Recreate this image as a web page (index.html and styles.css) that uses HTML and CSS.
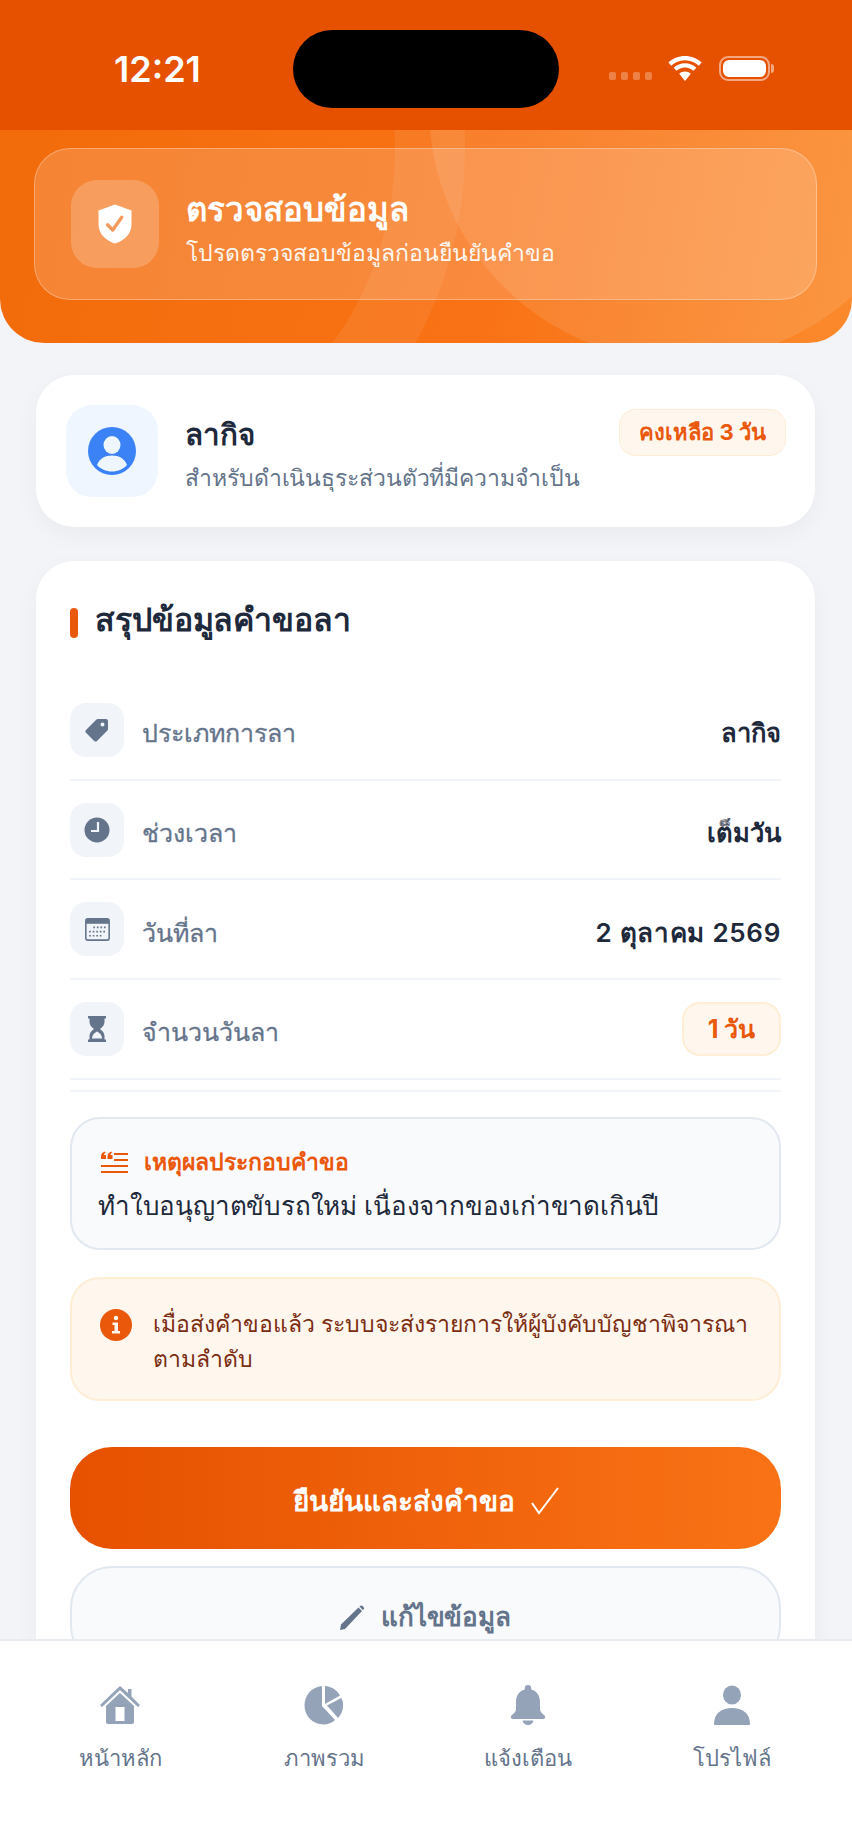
FILE: index.html
```html
<!DOCTYPE html>
<html lang="th">
<head>
    <meta charset="UTF-8">
    <meta name="viewport" content="width=device-width, initial-scale=1.0">
    <title>ตรวจสอบข้อมูล</title>
    <link rel="stylesheet" href="styles.css">
</head>
<body>
    <div class="screen">
        <header class="hero">
            <div class="status-bar">
                <span class="clock">12:21</span>
                <div class="island"></div>
                <div class="status-icons">
                    <span class="signal"><i></i><i></i><i></i><i></i></span>
                    <svg class="wifi" viewBox="0 0 34 26"><path d="M17 5c-5.200 0-9.800 2-13.300 5.300l-2.700-3C5.200 3.300 10.800 1 17 1s11.800 2.300 16 6.300l-2.700 3C26.800 7 22.200 5 17 5zM17 12c-3.200 0-6 1.200-8.200 3.200l-2.700-3C9 9.500 12.800 8 17 8s8 1.500 10.900 4.200l-2.700 3C23 13.200 20.200 12 17 12zM11.400 18c1.500-1.300 3.500-2.100 5.600-2.100s4.100.8 5.600 2.100L17 25z"/></svg>
                    <span class="battery"><b></b></span>
                </div>
            </div>
            <div class="hero-body">
                <div class="hero-art">
                    <span class="arc arc-big"></span>
                    <span class="arc arc-ring"></span>
                </div>
                <div class="glass-card">
                    <div class="glass-icon">
                        <svg viewBox="0 0 24 28" width="36" height="42"><path fill="#fff" d="M12 1l11 4v9c0 6.500-4.500 11-11 13C5.500 25 1 20.500 1 14V5z"/><path fill="none" stroke="#f59a5a" stroke-width="2.200" stroke-linecap="round" stroke-linejoin="round" d="M7 14.500l3.500 3.500 6-8.500"/></svg>
                    </div>
                    <div class="glass-text">
                        <h1>ตรวจสอบข้อมูล</h1>
                        <p>โปรดตรวจสอบข้อมูลก่อนยืนยันคำขอ</p>
                    </div>
                </div>
            </div>
        </header>

        <main class="content">
            <section class="card type-card">
                <div class="type-icon">
                    <svg viewBox="0 0 48 48" width="48" height="48"><circle cx="24" cy="24" r="24" fill="#3b82f6"/><ellipse cx="24" cy="18" rx="8.500" ry="9" fill="#eff6ff"/><path fill="#eff6ff" d="M9 38c2.500-6.500 8-9.500 15-9.500s12.500 3 15 9.500c-3.500 4-9 6.500-15 6.500S12.500 42 9 38z"/></svg>
                </div>
                <div class="type-text">
                    <h2>ลากิจ</h2>
                    <p>สำหรับดำเนินธุระส่วนตัวที่มีความจำเป็น</p>
                </div>
                <span class="badge">คงเหลือ 3 วัน</span>
            </section>

            <section class="card summary-card">
                <h3 class="section-title">สรุปข้อมูลคำขอลา</h3>

                <div class="row">
                    <span class="row-icon">
                        <svg viewBox="0 0 26 26" width="26" height="26"><path fill="#64748b" d="M14 2h8a2 2 0 0 1 2 2v8c0 .8-.3 1.300-.8 1.800L13 24c-.8.800-2 .8-2.800 0L2 15.800c-.8-.8-.8-2 0-2.800L12.200 2.800C12.700 2.300 13.200 2 14 2zm4.500 3.500a2 2 0 1 0 0 4 2 2 0 0 0 0-4z"/></svg>
                    </span>
                    <span class="row-label">ประเภทการลา</span>
                    <span class="row-value">ลากิจ</span>
                </div>
                <div class="row">
                    <span class="row-icon">
                        <svg viewBox="0 0 26 26" width="26" height="26"><circle cx="13" cy="13" r="12.500" fill="#64748b"/><path fill="none" stroke="#f1f5f9" stroke-width="2.200" d="M14 5v9H7"/></svg>
                    </span>
                    <span class="row-label">ช่วงเวลา</span>
                    <span class="row-value">เต็มวัน</span>
                </div>
                <div class="row">
                    <span class="row-icon">
                        <svg viewBox="0 0 24 22" width="25" height="23"><rect x=".8" y=".8" width="22.400" height="20.400" rx="2" fill="#f1f5f9" stroke="#64748b" stroke-width="1.500"/><rect x="1" y="1" width="22" height="4.500" fill="#64748b"/><path stroke="#64748b" stroke-width="1.600" stroke-dasharray="1.600 1.800" d="M8 9h12M4 13h16M4 17h12"/></svg>
                    </span>
                    <span class="row-label">วันที่ลา</span>
                    <span class="row-value row-date">2 ตุลาคม 2569</span>
                </div>
                <div class="row">
                    <span class="row-icon">
                        <svg viewBox="0 0 18 26" width="18" height="26"><path fill="#64748b" d="M0 0h18v2.500h-1.500v3.500c0 3-2 5.300-4.500 7 2.500 1.700 4.500 4 4.500 7v3.500H18V26H0v-2.500h1.500V20c0-3 2-5.300 4.500-7-2.500-1.700-4.500-4-4.500-7V2.500H0z"/><path fill="#f1f5f9" d="M9 15.500c-2.500 1.500-4.800 3-5 7h10c-.2-4-2.500-5.500-5-7z"/></svg>
                    </span>
                    <span class="row-label">จำนวนวันลา</span>
                    <span class="day-pill">1 วัน</span>
                </div>

                <div class="reason-box">
                    <div class="reason-label">
                        <svg viewBox="0 0 27 22" width="27" height="22"><path fill="none" stroke="#ea580c" stroke-width="2.200" d="M13 3h14M13 9h14M0 15h27M0 21h27"/><path fill="#ea580c" d="M0 5.500C0 3 1.500 1 4 .5L4.500 2C3.500 2.400 3 3 3 4h2v4H0zM6.500 5.500C6.500 3 8 1 10.500.5L11 2c-1 .4-1.500 1-1.500 2h2v4h-5z"/></svg>
                        <span>เหตุผลประกอบคำขอ</span>
                    </div>
                    <p>ทำใบอนุญาตขับรถใหม่ เนื่องจากของเก่าขาดเกินปี</p>
                </div>

                <div class="info-box">
                    <svg class="info-icon" viewBox="0 0 32 32" width="32" height="32"><circle cx="16" cy="16" r="16" fill="#ea580c"/><circle cx="16" cy="9" r="2.200" fill="#fff7ed"/><path fill="#fff7ed" d="M12.500 13.500H18V22h2v2.500h-8V22h2.500v-6h-2z"/></svg>
                    <p>เมื่อส่งคำขอแล้ว ระบบจะส่งรายการให้ผู้บังคับบัญชาพิจารณา<br>ตามลำดับ</p>
                </div>

                <button class="btn btn-primary" type="button">ยืนยันและส่งคำขอ <svg viewBox="0 0 28 28" width="28" height="28"><path fill="none" stroke="#fff" stroke-width="2" d="M1 16l7 10L27 1"/></svg></button>
                <button class="btn btn-secondary" type="button"><svg viewBox="0 0 26 26" width="26" height="26"><path fill="#64748b" d="M0 26l1-5.500L18.500 3.500l3.500 3.500L5 25z"/><path fill="#64748b" d="M20 2c.8-.8 1.800-.8 2.600 0l.9.900c.8.800.8 1.800 0 2.600l-.6.600-3.500-3.500z"/></svg> แก้ไขข้อมูล</button>
            </section>
        </main>

        <nav class="bottom-nav">
            <a class="nav-item">
                <svg viewBox="0 0 40 40" width="40" height="40"><path fill="#94a3b8" d="M20 1L28 8V4h3.500v7.500L40 20l-2 2L20 5 2 22l-2-2z"/><path fill="#94a3b8" fill-rule="evenodd" d="M20 8l14 13v16c0 1.200-.8 2-2 2H8c-1.200 0-2-.8-2-2V21zM15.500 22v14h9V22z"/></svg>
                <span>หน้าหลัก</span>
            </a>
            <a class="nav-item">
                <svg viewBox="0 0 40 40" width="40" height="40"><path fill="#94a3b8" d="M18 1v20l13 14c-3 2.800-7 4.500-11.500 4.500C9 39.500.5 31 .5 20.500S8 1.800 18 1z"/><path fill="#94a3b8" d="M21 1c6.500.4 12 4 15 9.500L21 19zM37.300 13c1.300 2.200 1.800 4.800 1.800 7.500 0 4.800-1.900 9.200-5 12.500L23 20.500z"/></svg>
                <span>ภาพรวม</span>
            </a>
            <a class="nav-item">
                <svg viewBox="0 0 40 40" width="40" height="40"><path fill="#94a3b8" d="M20 0c2 0 3.200 1.300 3.200 3v1.500C29 6 32 11 32 17v7c0 3 2.500 4.500 4.500 6.500 1.300 1.300.8 3.500-1.500 3.500H5c-2.300 0-2.800-2.200-1.500-3.500C5.500 28.500 8 27 8 24v-7c0-6 3-11 8.800-12.500V3c0-1.700 1.200-3 3.200-3zM14.500 35.500h11C25 38.300 22.800 40 20 40s-5-1.700-5.500-4.500z"/></svg>
                <span>แจ้งเตือน</span>
            </a>
            <a class="nav-item">
                <svg viewBox="0 0 40 40" width="40" height="40"><ellipse cx="20" cy="10" rx="9" ry="9.500" fill="#94a3b8"/><path fill="#94a3b8" d="M2 39c0-11 8-16 18-16s18 5 18 16c0 .6-.4 1-1 1H3c-.6 0-1-.4-1-1z"/></svg>
                <span>โปรไฟล์</span>
            </a>
        </nav>
    </div>
</body>
</html>
```

FILE: styles.css
```css
:root {
    --orange-dark: #e65100;
    --orange: #ea580c;
    --slate-900: #1e293b;
    --slate-500: #64748b;
    --font: Inter, "Noto Sans", "Liberation Sans", sans-serif;
}

* { box-sizing: border-box; }
body { margin: 0; font-family: var(--font); background: #f1f5f9; color: var(--slate-900); }
h1, h2, h3, p { margin: 0; }

.screen { position: relative; width: 852px; height: 1847px; overflow: hidden; background: #f2f4f7; }

/* Orange header */
.hero { height: 343px; border-radius: 0 0 44px 44px; overflow: hidden; background: linear-gradient(100deg, #f26b0a 0%, #f97316 60%, #fb8a2c 100%); display: flex; flex-direction: column; }
.status-bar { height: 130px; flex: none; background: var(--orange-dark); display: flex; align-items: center; padding: 7px 82px 0 114px; }
.clock { width: 179px; color: #fff; font-size: 36px; font-weight: 600; }
.island { width: 266px; height: 78px; border-radius: 39px; background: #000; }
.status-icons { margin-left: auto; display: flex; align-items: center; }
.signal { display: flex; gap: 5px; margin-top: 14px; margin-right: 15px; }
.signal i { width: 7px; height: 8px; border-radius: 2px; background: rgba(255, 255, 255, 0.28); }
.wifi { width: 36px; height: 27px; fill: #fff; margin-right: 16px; }
.battery { position: relative; width: 51px; height: 25px; border: 2px solid rgba(255, 255, 255, 0.5); border-radius: 9px; padding: 2px; }
.battery b { display: block; height: 100%; border-radius: 6px; background: #fff; }
.battery::after { content: ""; position: absolute; right: -6px; top: 6px; width: 3px; height: 9px; border-radius: 0 3px 3px 0; background: rgba(255, 255, 255, 0.5); }

.hero-body { position: relative; flex: 1; padding: 18px 35px 0 34px; }
.hero-art { position: absolute; inset: 0; overflow: hidden; }
.arc { position: absolute; border-radius: 50%; }
.arc-big { left: 429px; top: -277px; width: 508px; height: 508px; background: rgba(255, 255, 255, 0.1); }
.arc-ring { left: -335px; top: -380px; width: 800px; height: 800px; border: 70px solid rgba(255, 255, 255, 0.07); }

.glass-card { position: relative; height: 152px; display: flex; align-items: center; gap: 27px; padding: 0 36px; border: 1.5px solid rgba(255, 255, 255, 0.3); border-radius: 36px; background: rgba(255, 255, 255, 0.17); color: #fff; }
.glass-icon { width: 88px; height: 88px; flex: none; border-radius: 26px; background: rgba(255, 255, 255, 0.2); display: flex; align-items: center; justify-content: center; }
.glass-text { padding-top: 9px; }
.glass-card h1 { font-size: 33px; font-weight: 700; line-height: 42px; }
.glass-card p { font-size: 23px; line-height: 32px; margin-top: 7px; opacity: 0.92; }

/* Cards */
.content { padding: 32px 37px 0 36px; display: flex; flex-direction: column; gap: 34px; }
.card { background: #fff; border-radius: 38px; box-shadow: 0 8px 24px rgba(15, 23, 42, 0.04); }
.type-card { height: 152px; display: flex; align-items: center; gap: 27px; padding: 0 30px; position: relative; }
.type-icon { width: 92px; height: 92px; flex: none; border-radius: 26px; background: #eff6ff; display: flex; align-items: center; justify-content: center; }
.type-text { padding-top: 4px; }
.type-text h2 { font-size: 29.500px; font-weight: 700; line-height: 40px; margin-bottom: 9px; }
.type-text p { font-size: 23px; letter-spacing: -0.1px; line-height: 30px; color: var(--slate-500); }
.badge { position: absolute; right: 29px; top: 34px; height: 47px; padding: 0 19px; display: flex; align-items: center; border: 1px solid #ffedd5; border-radius: 16px; background: #fff7ed; color: var(--orange); font-size: 22px; font-weight: 700; }

.summary-card { padding: 35px 34px 0; height: 1200px; }
.section-title { display: flex; align-items: center; gap: 17px; font-size: 32px; letter-spacing: -0.1px; font-weight: 700; line-height: 48px; margin-bottom: 37px; }
.section-title::before { content: ""; width: 8px; height: 30px; margin-top: 6px; border-radius: 4px; background: var(--orange); }

.row { height: 99.700px; display: flex; align-items: center; gap: 18px; border-bottom: 2px solid #f1f5f9; }
.row-icon { width: 54px; height: 54px; flex: none; border-radius: 16px; background: #f1f5f9; display: flex; align-items: center; justify-content: center; }
.row-label { flex: 1; padding-top: 7px; font-size: 25px; font-weight: 500; color: var(--slate-500); -webkit-text-stroke: 0.3px var(--slate-500); }
.row-value { padding-top: 7px; font-size: 25.500px; font-weight: 600; }
.row-date { font-size: 26px; letter-spacing: 0.7px; }
.day-pill { width: 99px; height: 54px; display: flex; align-items: center; justify-content: center; border: 2px solid #ffedd5; border-radius: 18px; background: #fff7ed; color: var(--orange); font-size: 25px; font-weight: 700; }

.reason-box { margin-top: 37px; height: 133px; padding: 28px 26px; border: 2px solid #e2e8f0; border-radius: 30px; background: #f8fafc; position: relative; }
.reason-box::before { content: ""; position: absolute; left: -2px; right: -2px; top: -29px; height: 2px; background: #f1f5f9; }
.reason-label { display: flex; align-items: center; gap: 16px; padding-left: 3px; color: var(--orange); font-size: 23px; font-weight: 600; line-height: 30px; }
.reason-box p { font-size: 26px; letter-spacing: -0.2px; line-height: 40px; margin-top: 9px; }

.info-box { margin-top: 27px; height: 124px; padding: 28px 28px; display: flex; gap: 21px; border: 2px solid #ffedd5; border-radius: 30px; background: #fff7ed; }
.info-icon { flex: none; margin-top: 2px; }
.info-box p { font-size: 23px; line-height: 35px; white-space: nowrap; color: #7c2d12; }

.btn { width: 100%; display: flex; align-items: center; justify-content: center; font-family: var(--font); }
.btn-primary { margin-top: 46px; height: 102px; padding-top: 8px; gap: 16px; border: none; border-radius: 42px; background: linear-gradient(90deg, #e65100, #f97316); color: #fff; font-size: 28px; font-weight: 700; }
.btn-secondary { margin-top: 17px; height: 102px; gap: 15px; border: 2px solid #e2e8f0; border-radius: 42px; background: #f8fafc; color: var(--slate-500); font-size: 26px; letter-spacing: -0.2px; font-weight: 600; }

/* Tab bar */
.bottom-nav { position: absolute; left: 0; right: 0; bottom: 0; height: 208px; padding: 44px 18px 0; display: flex; justify-content: space-between; align-items: flex-start; background: #fff; border-top: 2px solid #e8ecf1; }
.nav-item { flex: 1; display: flex; flex-direction: column; align-items: center; gap: 16px; color: var(--slate-500); font-size: 22px; font-weight: 500; }
```
